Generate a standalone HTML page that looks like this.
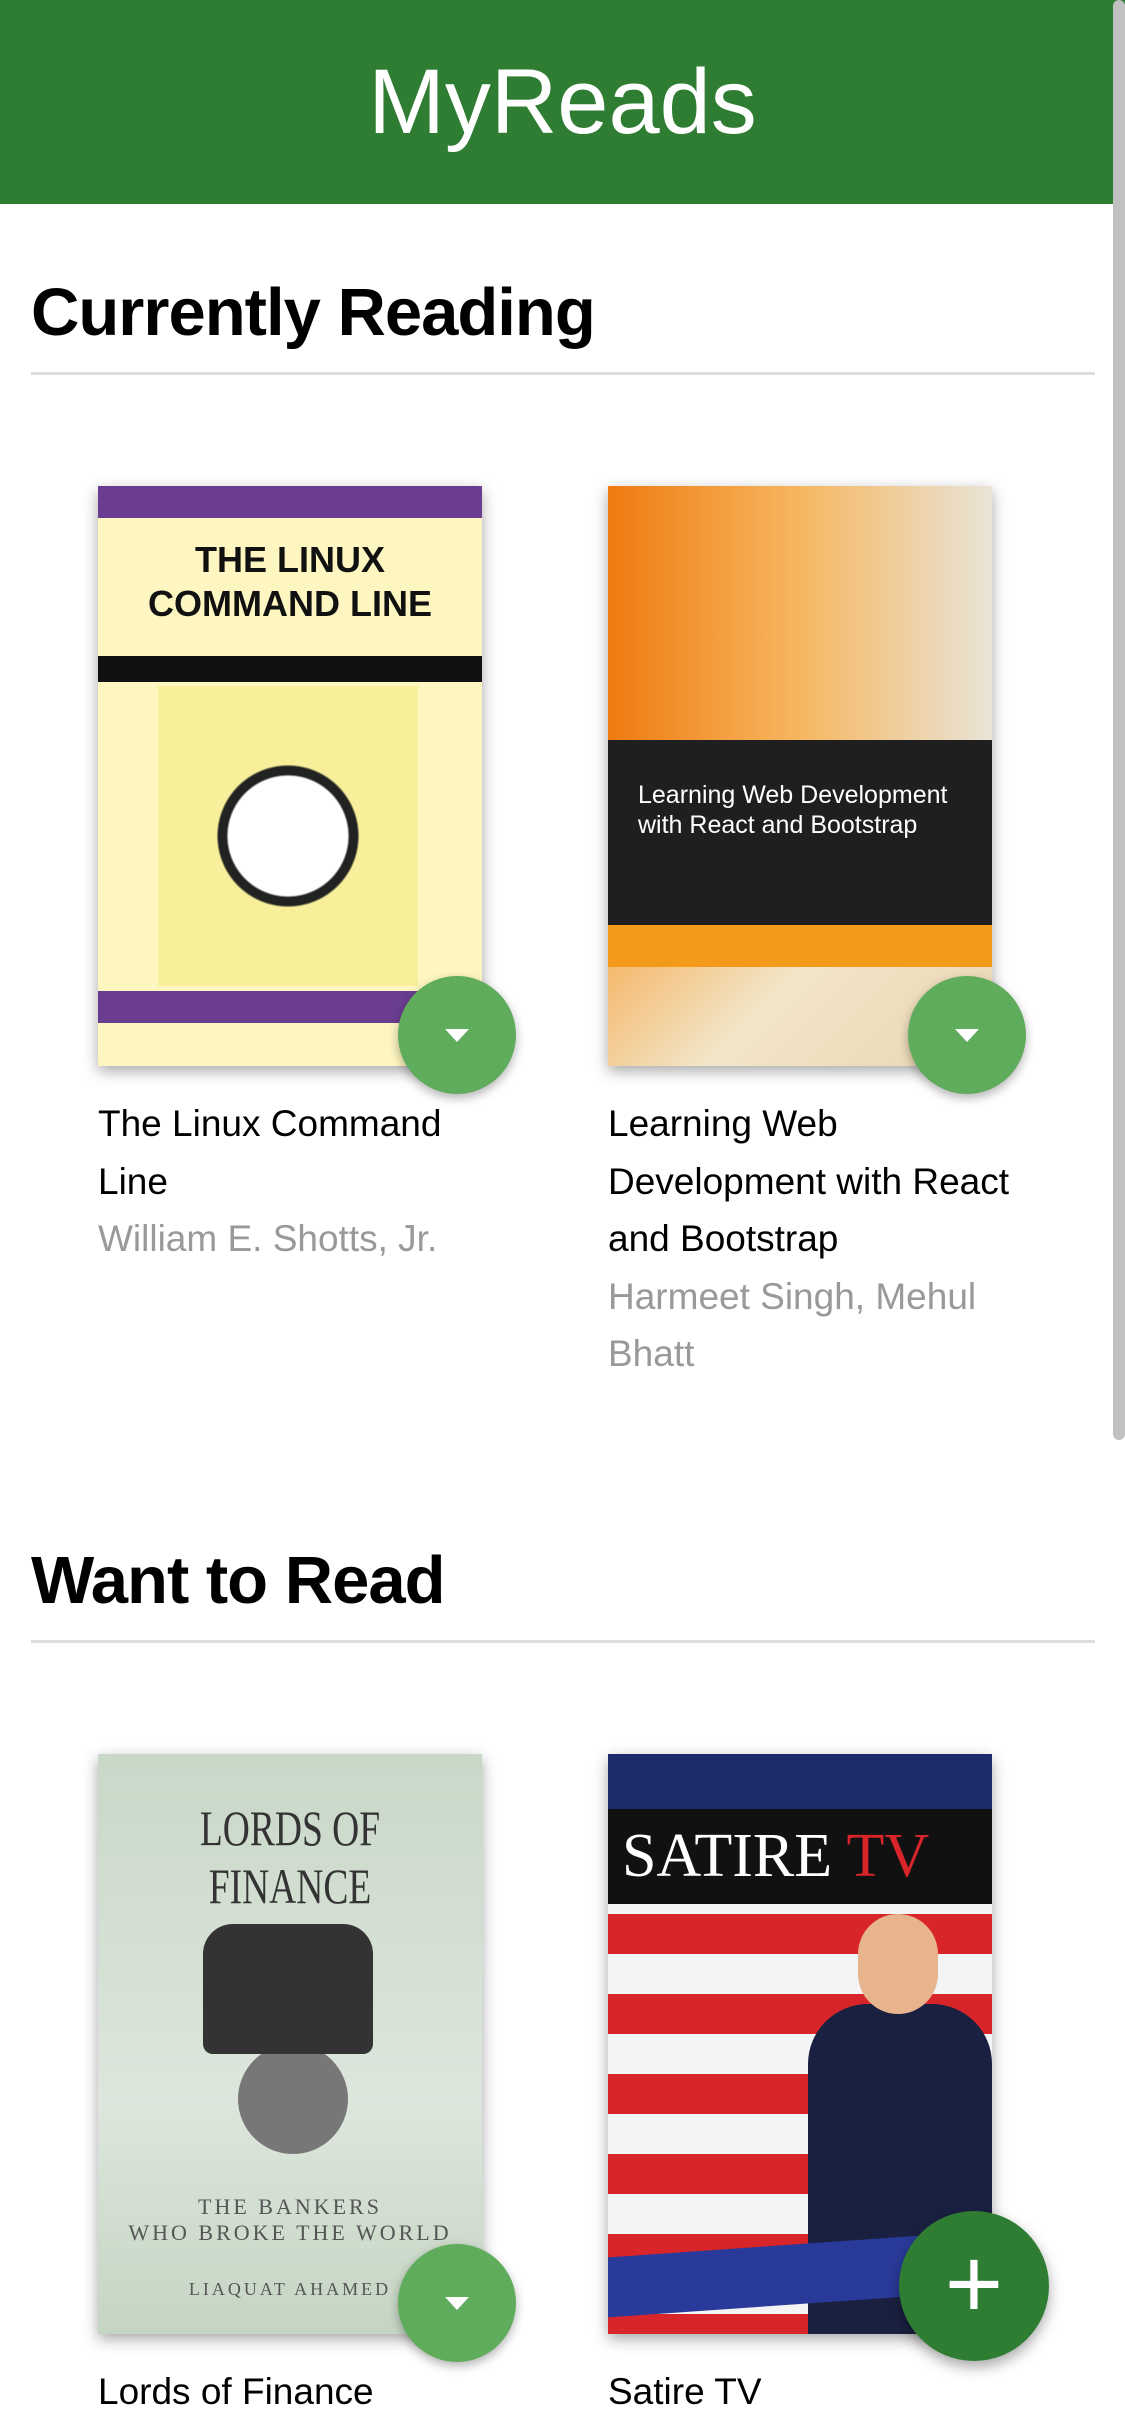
<!DOCTYPE html>
<html><head><meta charset="utf-8"><style>
*{margin:0;padding:0;box-sizing:border-box}
body{width:1125px;height:2436px;overflow:hidden;background:#fff;font-family:"Liberation Sans",sans-serif;position:relative}
.hdr{position:absolute;left:0;top:0;width:1125px;height:204px;background:#2e7d32;color:#fff;text-align:center;font-size:92px;line-height:204px}
.sb{position:absolute;right:0;top:0;width:12px;height:1440px;background:#c1c1c1;border-radius:6px}
h2{position:absolute;left:31px;font-size:67px;font-weight:bold;color:#000;letter-spacing:-1px}
.ln{position:absolute;left:31px;width:1064px;height:3px;background:#dedede}
.cv{position:absolute;width:384px;height:580px;box-shadow:0 5px 14px rgba(0,0,0,.35);overflow:hidden}
.bt{position:absolute;width:118px;height:118px;border-radius:50%;background:#60ac5d;box-shadow:0 4px 10px rgba(0,0,0,.3)}
.bt:after{content:"";position:absolute;left:47px;top:53px;border-left:12px solid transparent;border-right:12px solid transparent;border-top:13px solid #fff}
.t{position:absolute;width:400px;font-size:37px;line-height:57.5px;color:#000}
.t span{color:#999;display:block}
.fab{position:absolute;left:899px;top:2211px;width:150px;height:150px;border-radius:50%;background:#2e7d32;box-shadow:0 6px 14px rgba(0,0,0,.35);color:#fff;font-size:100px;line-height:146px;text-align:center}
</style></head><body>
<div class="hdr">MyReads</div>
<div class="sb"></div>
<h2 style="top:274px">Currently Reading</h2>
<div class="ln" style="top:372px"></div>

<div class="cv" style="left:98px;top:486px;background:#fdf6c0">
 <div style="height:32px;background:#6a3d91"></div>
 <div style="text-align:center;font-weight:bold;font-size:36px;line-height:44px;margin-top:20px;color:#111">THE LINUX<br>COMMAND LINE</div>
 <div style="height:26px;background:#111;margin-top:30px"></div>
 <div style="position:absolute;left:60px;top:200px;width:260px;height:300px;background:radial-gradient(circle,#fff 30%,#222 31%,#222 35%,#f7ef9a 36%)"></div>
 <div style="position:absolute;left:0;top:505px;width:384px;height:32px;background:#6a3d91"></div>
</div>
<div class="bt" style="left:398px;top:976px"></div>
<div class="t" style="left:98px;top:1095px;width:390px">The Linux Command Line<span>William E. Shotts, Jr.</span></div>

<div class="cv" style="left:608px;top:486px;background:linear-gradient(135deg,#e8720c,#f4a340 40%,#f3e5c8 70%,#e9d6b3)">
 <div style="position:absolute;left:0;top:0;width:384px;height:254px;background:linear-gradient(90deg,#ef7a10,#f6b760 50%,#e9e4d8)"></div>
 <div style="position:absolute;left:0;top:254px;width:384px;height:185px;background:#1f1f1f;color:#fff;font-size:25px;line-height:30px;padding:40px 30px 0">Learning Web Development with React and Bootstrap</div>
 <div style="position:absolute;left:0;top:439px;width:384px;height:42px;background:#f39a1b"></div>
</div>
<div class="bt" style="left:908px;top:976px"></div>
<div class="t" style="left:608px;top:1095px;width:430px">Learning Web Development with React and Bootstrap<span>Harmeet Singh, Mehul Bhatt</span></div>

<h2 style="top:1542px">Want to Read</h2>
<div class="ln" style="top:1640px"></div>

<div class="cv" style="left:98px;top:1754px;background:linear-gradient(#c9d8c8,#dde6dc 60%,#c5d5c3)">
 <div style="text-align:center;font-family:'Liberation Serif',serif;font-size:50px;color:#333;margin-top:45px;transform:scaleX(.75)">LORDS OF FINANCE</div>
 <div style="position:absolute;left:140px;top:290px;width:110px;height:110px;border-radius:50%;background:#777"></div>
 <div style="position:absolute;left:105px;top:170px;width:170px;height:130px;background:#333;border-radius:30px 30px 10px 10px"></div>
 <div style="position:absolute;left:0;top:440px;width:384px;text-align:center;font-family:'Liberation Serif',serif;font-size:22px;color:#555;letter-spacing:3px">THE BANKERS<br>WHO BROKE THE WORLD</div>
 <div style="position:absolute;left:0;top:525px;width:384px;text-align:center;font-family:'Liberation Serif',serif;font-size:18px;color:#555;letter-spacing:3px">LIAQUAT AHAMED</div>
</div>
<div class="bt" style="left:398px;top:2244px"></div>
<div class="t" style="left:98px;top:2363px">Lords of Finance</div>

<div class="cv" style="left:608px;top:1754px;background:repeating-linear-gradient(180deg,#d8252a 0,#d8252a 40px,#f4f4f4 40px,#f4f4f4 80px)">
 <div style="position:absolute;left:0;top:0;width:384px;height:60px;background:#1d2a6b"></div>
 <div style="position:absolute;left:0;top:55px;width:384px;height:95px;background:#111;color:#fff;font-family:'Liberation Serif',serif;font-size:62px;line-height:95px;padding-left:14px">SATIRE <span style="color:#d8252a">TV</span></div>
 <div style="position:absolute;left:200px;top:250px;width:184px;height:330px;background:#1a2040;border-radius:60px 60px 0 0"></div>
 <div style="position:absolute;left:250px;top:160px;width:80px;height:100px;background:#e8b48d;border-radius:40px"></div>
 <div style="position:absolute;left:0;top:490px;width:384px;height:60px;background:#2a3a9a;transform:skewY(-4deg)"></div>
</div>
<div class="t" style="left:608px;top:2363px">Satire TV</div>
<div class="fab">+</div>
</body></html>
